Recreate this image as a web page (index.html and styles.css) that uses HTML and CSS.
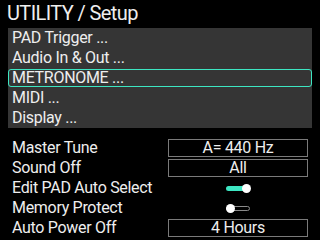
FILE: index.html
```html
<!DOCTYPE html>
<html lang="en">
  <head>
    <meta charset="UTF-8">
    <link rel="stylesheet" href="styles.css">
    <title>UTILITY / Setup</title>
  </head>
  <body>
    <h1 class="title">UTILITY / Setup</h1>

    <ul class="menu">
      <li class="item">PAD Trigger ...</li>
      <li class="item">Audio In &amp; Out ...</li>
      <li class="item selected">METRONOME ...</li>
      <li class="item">MIDI ...</li>
      <li class="item">Display ...</li>
    </ul>

    <div class="params">
      <div class="label">Master Tune</div>
      <div class="value box">A= 440 Hz</div>

      <div class="label">Sound Off</div>
      <div class="value box">All</div>

      <div class="label">Edit PAD Auto Select</div>
      <div class="value"><span class="toggle on"><span class="knob"></span></span></div>

      <div class="label">Memory Protect</div>
      <div class="value"><span class="toggle off"><span class="knob"></span></span></div>

      <div class="label">Auto Power Off</div>
      <div class="value box">4 Hours</div>
    </div>
  </body>
</html>
```

FILE: styles.css
```css
body {
  margin: 0;
  width: 320px;
  height: 240px;
  background: #000;
  color: #eee;
  font-family: Roboto, "Liberation Sans", sans-serif;
  overflow: hidden;
}

.title {
  margin: 0;
  height: 28px;
  line-height: 27px;
  padding-left: 7px;
  font-size: 20px;
  letter-spacing: -0.6px;
  font-weight: normal;
}

.menu {
  list-style: none;
  margin: 0 8px;
  padding: 0;
  background: #353535;
}

.item {
  height: 20px;
  line-height: 20px;
  padding-left: 4px;
  font-size: 16px;
  letter-spacing: -0.3px;
}

.selected {
  margin: 1px 0;
  padding-left: 3px;
  border: 1px solid #3de6c2;
  height: 16px;
  line-height: 16px;
  border-radius: 3px;
}

.params {
  margin-top: 10px;
  display: grid;
  grid-template-columns: 156px 140px;
  grid-auto-rows: 20px;
  padding-left: 12px;
  font-size: 16px;
  letter-spacing: -0.3px;
}

.label {
  line-height: 20px;
}

.value {
  display: flex;
  align-items: center;
  justify-content: center;
}

.box {
  margin: 1px 0;
  border: 1px solid #7a7a7a;
  line-height: 16px;
}

.toggle {
  position: relative;
  display: block;
  width: 24px;
  height: 5px;
  border-radius: 3px;
}

.toggle.on {
  background: #3de6c2;
}

.toggle.off {
  box-sizing: border-box;
  border: 1px solid #8a8a8a;
}

.knob {
  position: absolute;
  top: -2px;
  width: 9px;
  height: 9px;
  border-radius: 50%;
  background: #fff;
}

.on .knob {
  right: -1px;
}

.off .knob {
  left: -1px;
  top: -3px;
}
```
